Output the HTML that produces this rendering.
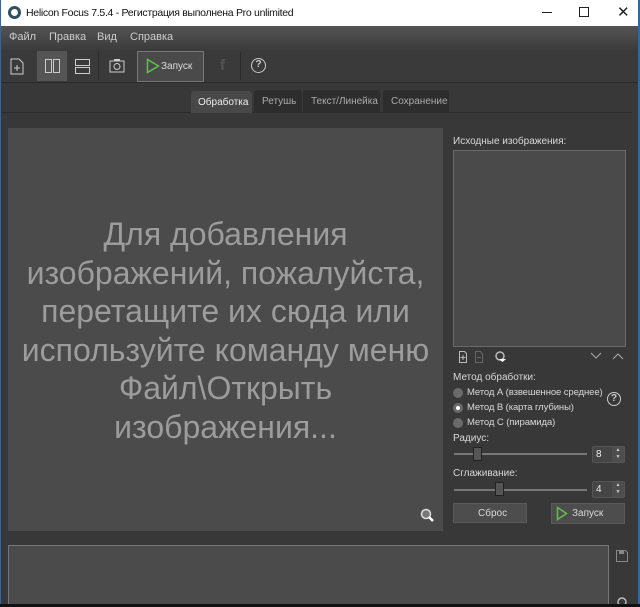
<!DOCTYPE html>
<html><head><meta charset="utf-8"><style>
*{margin:0;padding:0;box-sizing:border-box}
body{width:640px;height:607px;overflow:hidden;background:#383838;font-family:"Liberation Sans","DejaVu Sans",sans-serif;position:relative;color:#ddd}
.a{position:absolute}
.t{font-size:10px;color:#d8d8d8}
.r{font-size:9.5px;letter-spacing:-0.1px}
</style></head><body>
<div class="a" style="left:0;top:0;width:1px;height:607px;background:#2b6aa8;z-index:9"></div>
<div class="a" style="right:0;top:0;width:2px;height:607px;background:#2b6aa8;z-index:9"></div>
<div class="a" style="left:0;top:604px;width:640px;height:3px;background:#111;z-index:9"></div>
<div class="a" style="left:0;top:0;width:640px;height:26px;background:#fff"></div>
<div class="a" style="left:8px;top:6px;width:13px;height:13px;border-radius:50%;background:#2f4f63"></div>
<div class="a" style="left:11px;top:9px;width:7px;height:7px;border-radius:50%;background:#fff"></div>
<div class="a" style="left:26px;top:7px;font-size:10.5px;letter-spacing:-0.3px;color:#111">Helicon Focus 7.5.4 - Регистрация выполнена Pro unlimited</div>
<div class="a" style="left:542px;top:12px;width:10px;height:1px;background:#222"></div>
<div class="a" style="left:579px;top:7px;width:10px;height:10px;border:1px solid #222"></div>
<div class="a" style="left:617px;top:3px;font-size:15px;color:#222">✕</div>
<div class="a" style="left:0;top:26px;width:640px;height:24px;background:linear-gradient(#545454,#3c3c3c)"></div>
<div class="a t" style="left:9px;top:31px;font-size:11px;color:#ccc">Файл</div>
<div class="a t" style="left:49px;top:31px;font-size:11px;color:#ccc">Правка</div>
<div class="a t" style="left:97px;top:31px;font-size:11px;color:#ccc">Вид</div>
<div class="a t" style="left:130px;top:31px;font-size:11px;color:#ccc">Справка</div>
<div class="a" style="left:0;top:50px;width:640px;height:33px;background:#3a3a3a;border-bottom:1px solid #2a2a2a"></div>
<svg class="a" style="left:10px;top:58px" width="14" height="17"><path d="M1 1h8l4 4v11H1z" fill="none" stroke="#ccc"/><path d="M7 7v6M4 10h6" stroke="#ccc"/></svg>
<div class="a" style="left:37px;top:51px;width:30px;height:30px;background:#555"></div>
<div class="a" style="left:45px;top:59px;width:7px;height:14px;border:1.5px solid #ccc"></div>
<div class="a" style="left:53px;top:59px;width:7px;height:14px;border:1.5px solid #ccc"></div>
<div class="a" style="left:75px;top:59px;width:15px;height:7px;border:1.5px solid #ccc"></div>
<div class="a" style="left:75px;top:67px;width:15px;height:7px;border:1.5px solid #ccc"></div>
<div class="a" style="left:98px;top:52px;width:1px;height:28px;background:#2a2a2a"></div>
<svg class="a" style="left:109px;top:58px" width="16" height="15"><rect x="1" y="3" width="14" height="11" fill="none" stroke="#ccc"/><circle cx="8" cy="8.5" r="3" fill="none" stroke="#ccc"/><rect x="5" y="1" width="6" height="2" fill="#ccc"/></svg>
<div class="a" style="left:137px;top:51px;width:67px;height:31px;background:#4a4a4a;border:1px solid #777"></div>
<svg class="a" style="left:146px;top:58px" width="14" height="16"><path d="M1.5 1.5L12.5 8 1.5 14.5z" fill="none" stroke="#5fbf4a" stroke-width="1.5"/></svg>
<div class="a t" style="left:161px;top:61px;color:#ddd">Запуск</div>
<div class="a" style="left:220px;top:57px;font-size:15px;font-weight:bold;color:#555">f</div>
<div class="a" style="left:240px;top:52px;width:1px;height:28px;background:#2a2a2a"></div>
<div class="a" style="left:251px;top:58px;width:15px;height:15px;border:1.5px solid #ccc;border-radius:50%;font-size:10px;text-align:center;line-height:12px;color:#ccc;font-weight:bold">?</div>
<div class="a" style="left:0;top:112px;width:632px;height:1px;background:#2c2c2c"></div>
<div class="a" style="left:191px;top:91px;width:61px;height:22px;background:#484848;border-radius:3px 3px 0 0"></div>
<div class="a t" style="left:198px;top:97px;color:#eee">Обработка</div>
<div class="a" style="left:254px;top:90px;width:48px;height:22px;background:#2d2d2d;border-radius:3px 3px 0 0"></div>
<div class="a t" style="left:262px;top:96px;color:#aaa">Ретушь</div>
<div class="a" style="left:303px;top:90px;width:77px;height:22px;background:#2d2d2d;border-radius:3px 3px 0 0"></div>
<div class="a t" style="left:311px;top:96px;color:#aaa">Текст/Линейка</div>
<div class="a" style="left:383px;top:90px;width:66px;height:22px;background:#2d2d2d;border-radius:3px 3px 0 0"></div>
<div class="a t" style="left:391px;top:96px;color:#aaa">Сохранение</div>
<div class="a" style="left:8px;top:128px;width:435px;height:403px;background:#4b4b4b"></div>
<div class="a" style="left:0;top:215px;width:451px;text-align:center;font-size:32px;line-height:38.6px;color:#9c9c9c;white-space:nowrap">Для добавления<br>изображений, пожалуйста,<br>перетащите их сюда или<br>используйте команду меню<br>Файл\Открыть<br>изображения...</div>
<svg class="a" style="left:420px;top:508px" width="14" height="14"><circle cx="6" cy="6" r="4.5" fill="#777" stroke="#ddd" stroke-width="1.5"/><path d="M9 9l4 4" stroke="#fff" stroke-width="2.5"/></svg>
<div class="a t" style="left:453px;top:136px">Исходные изображения:</div>
<div class="a" style="left:453px;top:150px;width:173px;height:197px;background:#4a4a4a;border:1px solid #6a6a6a"></div>
<svg class="a" style="left:458px;top:351px" width="60" height="12"><path d="M1.5 .5h5l2 2v9h-7z" fill="none" stroke="#bbb"/><path d="M5 4v5M2.5 6.5h5" stroke="#bbb"/><path d="M17.5 .5h5l2 2v9h-7z" fill="none" stroke="#666"/><path d="M19 6.5h4" stroke="#666"/><circle cx="42" cy="5" r="4" fill="none" stroke="#bbb" stroke-width="1.5"/><path d="M41 8h7l-3.5 3z" fill="#fff"/></svg>
<svg class="a" style="left:590px;top:352px" width="34" height="8"><path d="M1 1l5 5 5-5M23 7l5-5 5 5" fill="none" stroke="#aaa"/></svg>
<div class="a t" style="left:453px;top:372px">Метод обработки:</div>
<div class="a" style="left:453px;top:388px;width:10px;height:10px;border-radius:50%;background:#6a6a6a"></div>
<div class="a t r" style="left:467px;top:387px">Метод А (взвешенное среднее)</div>
<div class="a" style="left:453px;top:403px;width:10px;height:10px;border-radius:50%;background:#6a6a6a"></div>
<div class="a" style="left:456px;top:406px;width:4px;height:4px;border-radius:50%;background:#fff"></div>
<div class="a t r" style="left:467px;top:402px">Метод В (карта глубины)</div>
<div class="a" style="left:453px;top:418px;width:10px;height:10px;border-radius:50%;background:#6a6a6a"></div>
<div class="a t r" style="left:467px;top:417px">Метод С (пирамида)</div>
<div class="a" style="left:607px;top:392px;width:14px;height:14px;border:1.5px solid #ccc;border-radius:50%;font-size:10px;text-align:center;line-height:11px;color:#ccc;font-weight:bold">?</div>
<div class="a t" style="left:453px;top:433px">Радиус:</div>
<div class="a" style="left:454px;top:453px;width:133px;height:2px;background:#777"></div>
<div class="a" style="left:473px;top:447px;width:9px;height:14px;background:#555;border:1px solid #222"></div>
<div class="a" style="left:592px;top:446px;width:33px;height:17px;background:#454545;border:1px solid #555;border-radius:2px"></div>
<div class="a t" style="left:596px;top:449px;color:#eee">8</div>
<div class="a" style="left:612px;top:447px;width:12px;height:15px;background:#4e4e4e;font-size:5px;color:#ccc;text-align:center;line-height:7px">▲<br>▼</div>
<div class="a t" style="left:453px;top:468px">Сглаживание:</div>
<div class="a" style="left:454px;top:489px;width:133px;height:2px;background:#777"></div>
<div class="a" style="left:495px;top:482px;width:9px;height:14px;background:#555;border:1px solid #222"></div>
<div class="a" style="left:592px;top:481px;width:33px;height:17px;background:#454545;border:1px solid #555;border-radius:2px"></div>
<div class="a t" style="left:596px;top:484px;color:#eee">4</div>
<div class="a" style="left:612px;top:482px;width:12px;height:15px;background:#4e4e4e;font-size:5px;color:#ccc;text-align:center;line-height:7px">▲<br>▼</div>
<div class="a" style="left:453px;top:503px;width:74px;height:20px;background:#4d4d4d;border:1px solid #5a5a5a"></div>
<div class="a t" style="left:478px;top:508px">Сброс</div>
<div class="a" style="left:551px;top:503px;width:74px;height:21px;background:#4d4d4d;border:1px solid #5a5a5a"></div>
<svg class="a" style="left:556px;top:506px" width="12" height="15"><path d="M1.5 1.5L10.5 7.5 1.5 13.5z" fill="none" stroke="#5fbf4a" stroke-width="1.5"/></svg>
<div class="a t" style="left:572px;top:508px">Запуск</div>
<div class="a" style="left:8px;top:545px;width:601px;height:62px;background:#4b4b4b;border:1px solid #777"></div>
<svg class="a" style="left:616px;top:550px" width="12" height="12"><path d="M.5 .5h9l2 2v9H.5z" fill="none" stroke="#888"/><rect x="3" y="1" width="5" height="3" fill="#888"/></svg>
<svg class="a" style="left:616px;top:596px" width="14" height="10"><circle cx="6" cy="6" r="4" fill="none" stroke="#bbb" stroke-width="1.5"/></svg>
</body></html>
